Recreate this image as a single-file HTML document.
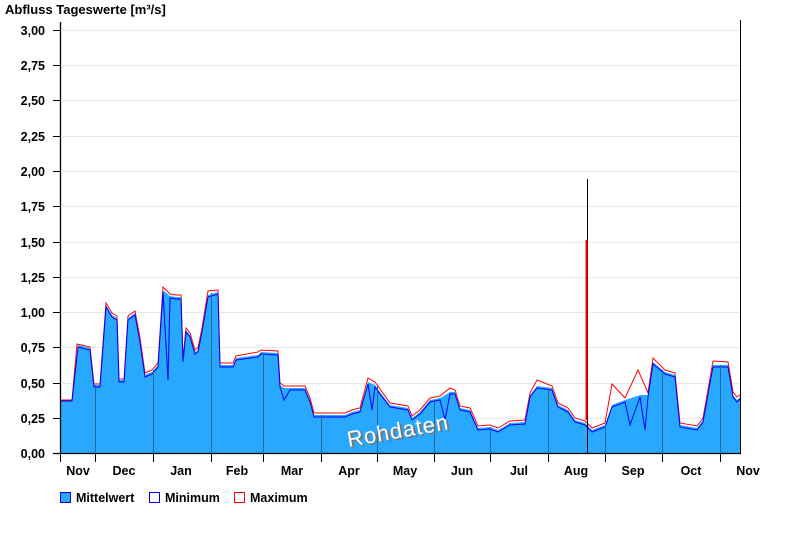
<!DOCTYPE html>
<html><head><meta charset="utf-8"><style>
body{margin:0;background:#fff;width:800px;height:550px;overflow:hidden;font-family:"Liberation Sans",Arial,sans-serif;}
</style></head><body>
<svg width="800" height="550" xmlns="http://www.w3.org/2000/svg" font-family="Liberation Sans, Arial, sans-serif" font-weight="bold" font-size="13">
<text x="5" y="14" font-size="13">Abfluss Tageswerte [m³/s]</text>
<g stroke="#e8e8e8" stroke-width="1">
<line x1="61" y1="30.5" x2="740" y2="30.5"/><line x1="61" y1="65.5" x2="740" y2="65.5"/><line x1="61" y1="100.5" x2="740" y2="100.5"/><line x1="61" y1="136.5" x2="740" y2="136.5"/><line x1="61" y1="171.5" x2="740" y2="171.5"/><line x1="61" y1="206.5" x2="740" y2="206.5"/><line x1="61" y1="242.5" x2="740" y2="242.5"/><line x1="61" y1="277.5" x2="740" y2="277.5"/><line x1="61" y1="312.5" x2="740" y2="312.5"/><line x1="61" y1="347.5" x2="740" y2="347.5"/><line x1="61" y1="383.5" x2="740" y2="383.5"/><line x1="61" y1="418.5" x2="740" y2="418.5"/>
</g>
<g text-anchor="end" font-size="12.5">
<text x="45" y="35">3,00</text><text x="45" y="70">2,75</text><text x="45" y="105">2,50</text><text x="45" y="141">2,25</text><text x="45" y="176">2,00</text><text x="45" y="211">1,75</text><text x="45" y="247">1,50</text><text x="45" y="282">1,25</text><text x="45" y="317">1,00</text><text x="45" y="352">0,75</text><text x="45" y="388">0,50</text><text x="45" y="423">0,25</text><text x="45" y="458">0,00</text>
</g>
<g stroke="#000"><line x1="53" y1="30.5" x2="60" y2="30.5"/><line x1="53" y1="65.5" x2="60" y2="65.5"/><line x1="53" y1="100.5" x2="60" y2="100.5"/><line x1="53" y1="136.5" x2="60" y2="136.5"/><line x1="53" y1="171.5" x2="60" y2="171.5"/><line x1="53" y1="206.5" x2="60" y2="206.5"/><line x1="53" y1="242.5" x2="60" y2="242.5"/><line x1="53" y1="277.5" x2="60" y2="277.5"/><line x1="53" y1="312.5" x2="60" y2="312.5"/><line x1="53" y1="347.5" x2="60" y2="347.5"/><line x1="53" y1="383.5" x2="60" y2="383.5"/><line x1="53" y1="418.5" x2="60" y2="418.5"/></g>
<polyline fill="none" stroke="#f00" stroke-width="1" points="61,400 72,400 77,344 90,347 94,384 100,384 106,303 112,313 117,316 119,379 124,379 128,316 135,311 140,338 145,373 152,370 158,363 163,287 170,294 176,295 181,295 183,358 186,328 190,333 195,350 198,348 202,328 208,291 218,290 220,363 233,363 236,356 258,352 261,350 278,351 280,383 284,386 305,386 310,398 314,413 345,413 352,410 360,408 368,378 375,382 380,389 390,403 408,406 412,416 420,410 430,398 440,396 450,388 455,390 460,406 470,408 478,426 490,425 498,428 510,421 525,420 530,393 537,380 552,386 558,403 568,408 575,418 585,421 592,428 605,423 612,384 625,398 638,370 648,393 653,358 665,370 675,373 680,423 697,426 703,418 708,390 713,361 728,362 733,392 737,397 740,395"/>
<polygon fill="#29a8ff" points="61,453 61,401 72,401 78,345 90,348 94,385 100,385 106,305 112,315 117,318 119,380 124,380 128,318 135,313 140,340 145,375 152,372 158,365 163,290 170,296 176,297 181,297 183,360 186,330 190,335 195,352 198,350 202,330 208,295 218,292 220,365 233,365 236,358 258,355 261,352 278,353 280,385 284,388 305,388 310,400 314,415 345,415 352,412 360,410 368,382 375,385 380,392 390,405 408,408 412,418 420,412 430,400 440,398 450,392 455,392 460,408 470,410 478,428 490,427 498,430 510,423 525,422 530,395 537,386 552,388 558,405 568,410 575,420 585,423 592,430 605,425 612,405 625,400 640,395 648,395 653,362 665,372 675,375 680,425 697,428 703,420 708,392 713,365 728,365 733,395 737,400 740,397 740,453"/>
<polyline fill="none" stroke="#00f" stroke-width="1" points="61,401 72,401 78,347 90,350 94,387 100,387 106,307 112,317 117,320 119,382 124,382 128,320 135,315 140,342 145,377 152,374 158,367 163,292 168,380 170,298 176,299 181,299 183,362 186,332 190,337 195,354 198,352 202,332 208,297 218,294 220,367 233,367 236,360 258,357 261,354 278,355 280,387 284,400 290,390 305,390 310,402 314,417 345,417 352,414 360,412 368,384 372,410 375,387 380,394 390,407 408,410 412,420 420,414 430,402 440,400 445,420 450,394 455,394 460,410 470,412 478,430 490,429 498,432 510,425 525,424 530,397 537,388 552,390 558,407 568,412 575,422 585,425 592,432 605,427 612,407 625,402 630,425 640,397 645,430 648,397 653,364 665,374 675,377 680,427 697,430 703,422 708,394 713,367 728,367 733,397 737,402 740,399"/>
<line x1="587.5" y1="179" x2="587.5" y2="453" stroke="#000"/>
<line x1="586.5" y1="240" x2="586.5" y2="420" stroke="#f00" stroke-width="2"/>
<g stroke="#1a6aa0" stroke-width="1"><line x1="95.5" y1="385" x2="95.5" y2="453"/><line x1="153.5" y1="370" x2="153.5" y2="453"/><line x1="211.5" y1="293" x2="211.5" y2="453"/><line x1="263.5" y1="353" x2="263.5" y2="453"/><line x1="321.5" y1="415" x2="321.5" y2="453"/><line x1="377.5" y1="386" x2="377.5" y2="453"/><line x1="434.5" y1="400" x2="434.5" y2="453"/><line x1="490.5" y1="427" x2="490.5" y2="453"/><line x1="548.5" y1="388" x2="548.5" y2="453"/><line x1="605.5" y1="425" x2="605.5" y2="453"/><line x1="662.5" y1="370" x2="662.5" y2="453"/><line x1="720.5" y1="365" x2="720.5" y2="453"/></g>
<line x1="740.5" y1="20" x2="740.5" y2="453" stroke="#000"/>
<line x1="60.5" y1="22" x2="60.5" y2="454" stroke="#000" stroke-width="1.3"/>
<line x1="53" y1="453.5" x2="741" y2="453.5" stroke="#000" stroke-width="1.3"/>
<g stroke="#000"><line x1="60.5" y1="454" x2="60.5" y2="462"/><line x1="95.5" y1="454" x2="95.5" y2="462"/><line x1="153.5" y1="454" x2="153.5" y2="462"/><line x1="211.5" y1="454" x2="211.5" y2="462"/><line x1="263.5" y1="454" x2="263.5" y2="462"/><line x1="321.5" y1="454" x2="321.5" y2="462"/><line x1="377.5" y1="454" x2="377.5" y2="462"/><line x1="434.5" y1="454" x2="434.5" y2="462"/><line x1="490.5" y1="454" x2="490.5" y2="462"/><line x1="548.5" y1="454" x2="548.5" y2="462"/><line x1="605.5" y1="454" x2="605.5" y2="462"/><line x1="662.5" y1="454" x2="662.5" y2="462"/><line x1="720.5" y1="454" x2="720.5" y2="462"/></g>
<g text-anchor="middle" font-size="12.5">
<text x="78" y="475">Nov</text><text x="124" y="475">Dec</text><text x="181" y="475">Jan</text><text x="237" y="475">Feb</text><text x="292" y="475">Mar</text><text x="349" y="475">Apr</text><text x="405" y="475">May</text><text x="462" y="475">Jun</text><text x="519" y="475">Jul</text><text x="576" y="475">Aug</text><text x="633" y="475">Sep</text><text x="691" y="475">Oct</text><text x="748" y="475">Nov</text>
</g>
<g font-weight="normal" font-size="22" transform="rotate(-10 398 428)">
<text x="348" y="440" fill="#777" textLength="102">Rohdaten</text>
<text x="346" y="438" fill="#fff" textLength="102">Rohdaten</text>
</g>
<rect x="60.5" y="492.5" width="10" height="10" fill="#29a8ff" stroke="#00f"/>
<text x="76" y="502" font-size="12.5">Mittelwert</text>
<rect x="149.5" y="492.5" width="10" height="10" fill="#fff" stroke="#00f"/>
<text x="165" y="502" font-size="12.5">Minimum</text>
<rect x="234.5" y="492.5" width="10" height="10" fill="#fff" stroke="#f00"/>
<text x="250" y="502" font-size="12.5">Maximum</text>
</svg>
</body></html>
